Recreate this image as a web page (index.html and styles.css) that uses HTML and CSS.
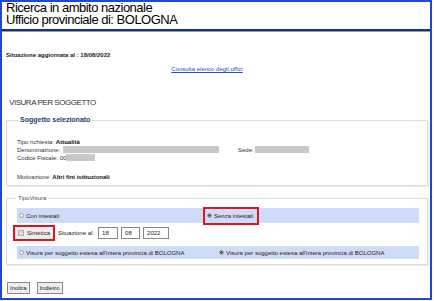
FILE: index.html
```html
<!DOCTYPE html>
<html lang="it">
<head>
<meta charset="utf-8">
<title>Visura per soggetto</title>
<link rel="stylesheet" href="styles.css">
</head>
<body>
<div class="frame">
  <h1 class="title"><span class="tline">Ricerca in ambito nazionale</span><span class="tline">Ufficio provinciale di: BOLOGNA</span></h1>
  <div class="rule"></div>
  <p class="updated">Situazione aggiornata al : 18/08/2022</p>
  <p class="linkrow"><a href="#" class="link">Consulta elenco degli uffici</a></p>
  <h2 class="section">VISURA PER SOGGETTO</h2>

  <fieldset class="box box-subject">
    <legend class="legend-strong">Soggetto selezionato</legend>
    <div class="line">Tipo richiesta: <b>Attualità</b></div>
    <div class="line">Denominazione: <span class="mask mask-name"></span><span class="sede">Sede: <span class="mask mask-sede"></span></span></div>
    <div class="line">Codice Fiscale: 00<span class="mask mask-cf"></span></div>
    <div class="line gap">Motivazione: <b>Altri fini istituzionali</b></div>
  </fieldset>

  <fieldset class="box box-type">
    <legend class="legend-plain">TipoVisura</legend>
    <div class="band">
      <label class="opt opt-half"><span class="radio"></span>Con intestati</label>
      <label class="opt opt-hl"><span class="radio on"></span>Senza intestati</label>
    </div>
    <div class="daterow">
      <label class="chk-hl"><span class="check"></span>Sintetica</label>
      <span class="datelabel">Situazione al:</span>
      <span class="field f-day">18</span>
      <span class="field f-month">08</span>
      <span class="field f-year">2022</span>
    </div>
    <div class="band band-2">
      <label class="opt opt-wide"><span class="radio"></span>Visura per soggetto estesa all'intera provincia di BOLOGNA</label>
      <label class="opt"><span class="radio on"></span>Visura per soggetto estesa all'intera provincia di BOLOGNA</label>
    </div>
  </fieldset>

  <div class="actions">
    <button class="btn" type="button">Inoltra</button>
    <button class="btn" type="button">Indietro</button>
  </div>
</div>
</body>
</html>
```

FILE: styles.css
```css
* { box-sizing: border-box; }
html, body { margin: 0; padding: 0; background: #fff; }
body { font-family: "Liberation Sans", Arial, sans-serif; color: #222; }

.frame {
  width: 432px;
  height: 300px;
  border: 2px solid #1d48d2;
  display: flex;
  flex-direction: column;
  overflow: hidden;
}

.title {
  margin: 0;
  padding: 0 0 0 4px;
  font-size: 13px;
  letter-spacing: -0.5px;
  font-weight: normal;
  color: #000;
  display: flex;
  flex-direction: column;
}
.tline { display: block; height: 12px; line-height: 12px; white-space: nowrap; }

.rule {
  margin-top: 3px;
  height: 3px;
  border-top: 2px solid #17346b;
  border-bottom: 1px solid #7d9bcf;
  margin-left: -2px;
  margin-right: -2px;
  flex: none;
}

.updated {
  margin: 19px 0 0 4px;
  font-size: 6px;
  font-weight: bold;
  line-height: 8px;
}

.linkrow {
  margin: 6px 0 0;
  padding-right: 18px;
  text-align: center;
  font-size: 6px;
  line-height: 8px;
}
.link { color: #2250b9; text-decoration: underline; }

.section {
  margin: 24px 0 0 7px;
  font-size: 8px;
  letter-spacing: -0.45px;
  font-weight: normal;
  line-height: 12px;
  color: #333;
}

.box {
  margin: 7px 2px 0 4px;
  border: 1px solid #dcdcdc;
  box-shadow: 1px 1px 0 #ececec;
  padding: 0 8px 4px 10px;
  font-size: 6px;
  line-height: 8px;
}
.box legend { padding: 0 2px; margin-left: 1px; line-height: 8px; }
.legend-strong { color: #1a3f73; font-weight: bold; font-size: 7px; }
.legend-plain { color: #555; font-size: 6px; }

.box-subject { padding-top: 14px; padding-bottom: 4px; }
.line { white-space: nowrap; color: #333; }
.line b { color: #111; }
.line.gap { margin-top: 11px; }
.mask { display: inline-block; background: #c8c8c8; height: 7px; vertical-align: -1px; }
.mask-name { width: 156px; margin-left: 1px; }
.mask-sede { width: 54px; }
.mask-cf { width: 29px; }
.sede { margin-left: 19px; }

.box-type { margin-top: 8px; padding: 6px 8px 5px 8px; }
.band {
  display: flex;
  align-items: center;
  background: #cfdcf8;
  height: 15px;
  margin-left: 2px;
}
.band-2 { height: 13px; margin-top: 4px; }
.opt { display: flex; align-items: center; color: #222; white-space: nowrap; }
.opt-half { width: 186px; padding-left: 2px; }
.opt-wide { width: 202px; padding-left: 2px; }
.opt-hl {
  height: 18px;
  padding: 0 4px 0 2px;
  border: 2px solid #e3131f;
  margin-right: auto;
}
.radio {
  width: 5px; height: 5px;
  border-radius: 50%;
  border: 1px solid #999;
  background: #fff;
  margin-right: 2px;
  flex: none;
}
.radio.on { background: radial-gradient(circle, #555 0 1.2px, #fff 1.6px); }

.daterow {
  display: flex;
  align-items: center;
  height: 18px;
  margin-top: 1px;
}
.chk-hl {
  display: flex; align-items: center;
  height: 16px;
  border: 2px solid #e3131f;
  padding: 0 3px 0 3px;
  margin-left: -2px;
  color: #222;
  background: #eee;
}
.check {
  width: 6px; height: 6px;
  border: 1px solid #aaa;
  background: #ddd;
  margin-right: 3px;
}
.datelabel { margin-left: 3px; color: #222; }
.field {
  display: inline-block;
  height: 12px;
  border: 1px solid #888;
  background: #fff;
  padding: 0 3px;
  line-height: 10px;
  margin-left: 3px;
  color: #222;
}
.f-day { width: 20px; margin-left: 4px; }
.f-month { width: 19px; }
.f-year { width: 26px; }

.actions {
  display: flex;
  gap: 7px;
  margin: 17px 0 0 5px;
}
.btn {
  font-family: inherit;
  font-size: 6px;
  height: 12px;
  padding: 0 2px;
  border: 1px solid #8a8a8a;
  background: #eee;
  color: #222;
  line-height: 10px;
}
```
